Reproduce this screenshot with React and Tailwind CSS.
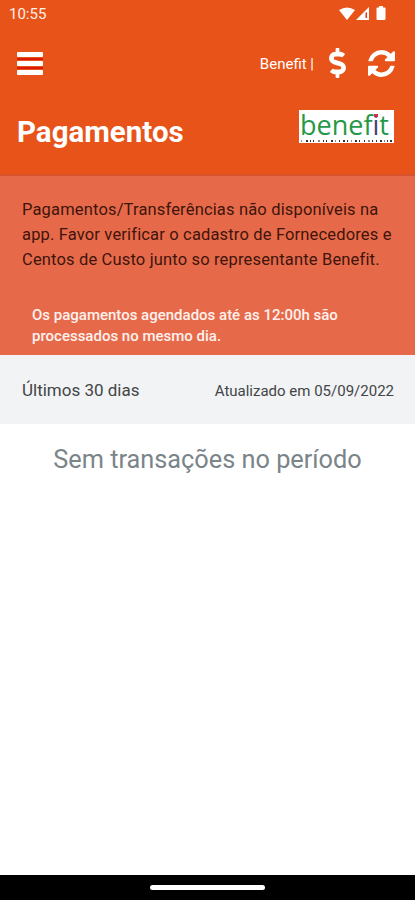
import { FaDollarSign } from 'react-icons/fa';

const ticks = [2, 7, 11, 14, 19, 24, 27, 32, 36, 40, 44, 48, 52, 56, 60, 65, 69, 73, 77, 81, 85, 88, 91];

const StatusBar = () => (
  <div className="h-7 pl-[9px] pr-7 flex items-center justify-between">
    <span className="text-[15px] leading-7 text-[#fff0ea]">10:55</span>
    <svg width="48" height="16" viewBox="0 0 48 16" fill="#fff">
      <path d="M0 4Q8-1 16 4L8 14Z" />
      <path d="M17 14 30 1V14Z" />
      <path d="M26.500 6.500H28V12H26.500Z" fill="#d9341a" />
      <path d="M38.500 1.500H40V0H44V1.500H45.500Q46.500 1.500 46.500 2.500V13Q46.500 14 45.500 14H38.500Q37.500 14 37.500 13V2.500Q37.500 1.500 38.500 1.500Z" />
    </svg>
  </div>
);

const RefreshIcon = () => (
  <svg className="ml-[22px] w-[27px] h-[27px]" viewBox="0 0 1536 1536" fill="currentColor">
    <path d="M1511 928q0 5-1 7-64 268-268 434.500t-478 166.500q-146 0-282.500-55t-243.500-157l-129 129q-19 19-45 19t-45-19-19-45v-448q0-26 19-45t45-19h448q26 0 45 19t19 45-19 45l-137 137q71 66 161 102t187 36q134 0 250-65t186-179q11-17 53-117 8-23 30-23h192q13 0 22.500 9.500t9.500 22.500zM1536 128v448q0 26-19 45t-45 19h-448q-26 0-45-19t-19-45 19-45l138-138q-148-137-349-137-134 0-250 65t-186 179q-11 17-53 117-8 23-30 23h-199q-13 0-22.500-9.500t-9.500-22.500v-7q65-268 270-434.500t480-166.500q146 0 284 55.500t245 156.500l130-129q19-19 45-19t45 19 19 45z" />
  </svg>
);

const Logo = () => (
  <div className="w-[95px] h-[33px] bg-white">
    <div className="h-[29px] pl-px text-[27px] leading-[29px] text-[#259847] font-['Open_Sans',sans-serif] [font-variant-ligatures:none] whitespace-nowrap">
      benef
      <span className="relative text-[#45456f]">
        i
        <span className="absolute left-[2px] top-[8px] w-[4px] h-[3px] bg-[#cf3044]" />
      </span>
      t
    </div>
    <svg className="block" width="95" height="4" viewBox="0 0 95 4">
      {ticks.map((x, i) => (
        <rect key={x} x={x} y="1" width={i % 3 === 1 ? 2 : 1} height="2" fill={i % 4 === 0 ? '#888' : '#333'} />
      ))}
    </svg>
  </div>
);

const Header = () => (
  <header className="h-[174px] bg-[#e85319] text-white">
    <StatusBar />
    <div className="h-[70px] pl-[17px] pr-5 flex items-center justify-between">
      <button className="flex flex-col" aria-label="Menu">
        <span className="w-[26px] h-[5px] rounded-[1px] bg-white" />
        <span className="w-[26px] h-[2px] mt-px mb-px bg-[#db1a08]" />
        <span className="w-[26px] h-[5px] rounded-[1px] bg-white" />
        <span className="w-[26px] h-[2px] mt-px mb-px bg-[#db1a08]" />
        <span className="w-[26px] h-[5px] rounded-[1px] bg-white" />
      </button>
      <div className="flex items-center">
        <span className="text-[15px] leading-5 pt-px">Benefit |</span>
        <FaDollarSign className="ml-[15px] w-[17px] h-[30px]" />
        <RefreshIcon />
      </div>
    </div>
    <div className="pl-[17px] pr-[21px] pt-3 flex items-start justify-between">
      <h1 className="pt-1 text-[29.5px] leading-9 font-bold">Pagamentos</h1>
      <Logo />
    </div>
  </header>
);

const Notice = () => (
  <section className="h-[181px] bg-[#e66a4a] border-t-2 border-[#d7532f] px-[22px] pt-[21px]">
    <p className="text-[16.5px] leading-[25px] tracking-[0.16px] text-[#3f140b] whitespace-nowrap">
      Pagamentos/Transferências não disponíveis na<br />
      app. Favor verificar o cadastro de Fornecedores e<br />
      Centos de Custo junto so representante Benefit.
    </p>
    <p className="mt-[33px] pl-[10px] text-[15px] leading-[21px] font-medium text-[#fff1ed] whitespace-nowrap">
      Os pagamentos agendados até as 12:00h são<br />
      processados no mesmo dia.
    </p>
  </section>
);

export default function App() {
  return (
    <div className="w-full h-[900px] flex flex-col bg-white font-['Roboto',sans-serif]">
      <Header />
      <Notice />
      <div className="h-[69px] pt-[3px] pl-[22px] pr-[21px] flex items-center justify-between bg-[#f1f3f5] text-[#434547]">
        <span className="text-[17px]">Últimos 30 dias</span>
        <span className="text-[15px]">Atualizado em 05/09/2022</span>
      </div>
      <main className="grow pt-[19px] text-center text-[25.3px] leading-[34px] text-[#7b8589]">
        Sem transações no período
      </main>
      <div className="h-[25px] bg-black flex justify-center">
        <div className="mt-[10px] w-[115px] h-[5px] rounded-full bg-white" />
      </div>
    </div>
  );
}
